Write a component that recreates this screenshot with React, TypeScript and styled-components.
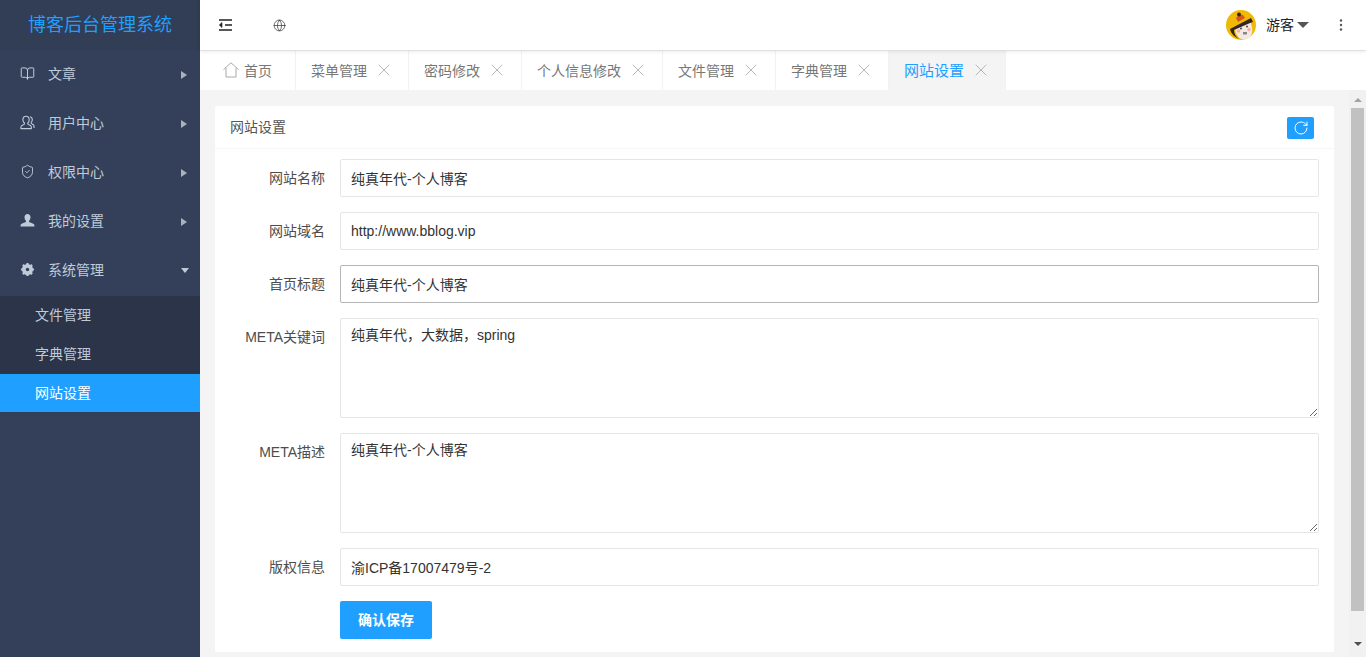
import React from "react";
import styled, { createGlobalStyle } from "styled-components";
import { X, RotateCw, BookOpen, ShieldCheck, Globe } from "lucide-react";

const GlobalStyle = createGlobalStyle`
  html, body, #root {
    margin: 0;
    height: 100%;
  }
  body {
    font-family: "Liberation Sans", "Noto Sans CJK SC", sans-serif;
    font-size: 14px;
    color: #333;
    overflow: hidden;
  }
  * {
    box-sizing: border-box;
  }
`;

const Layout = styled.div`
  display: flex;
  width: 100%;
  height: 657px;
`;

const Sidebar = styled.aside`
  flex: 0 0 200px;
  background: #344059;
`;

const Logo = styled.div`
  height: 51px;
  line-height: 50px;
  text-align: center;
  font-size: 18px;
  color: #1f9fff;
  background: #323d56;
`;

const MenuItem = styled.div`
  display: flex;
  align-items: center;
  height: 49px;
  padding: 0 11px 4px 20px;
  color: #bfcbd9;
`;

const MenuIcon = styled.span`
  display: flex;
  justify-content: center;
  width: 15px;
  margin-right: 13px;
`;

const MenuLabel = styled.span`
  flex: 1;
  padding-bottom: 2px;
`;

const Caret = styled.span<{ $open?: boolean }>`
  width: 0;
  height: 0;
  margin-top: 2px;
  ${(p) =>
    p.$open
      ? `border-left: 4.5px solid transparent;
         border-right: 4.5px solid transparent;
         border-top: 5px solid #bfcbd9;`
      : `border-top: 4.5px solid transparent;
         border-bottom: 4.5px solid transparent;
         border-left: 6px solid #a9b2c0;
         margin-right: 2px;`}
`;

const SubMenu = styled.div`
  background: #2b3449;
`;

const SubItem = styled.div<{ $active?: boolean }>`
  height: ${(p) => (p.$active ? "38px" : "39px")};
  line-height: 38px;
  padding-left: 35px;
  color: ${(p) => (p.$active ? "#fff" : "#bfcbd9")};
  background: ${(p) => (p.$active ? "#1f9fff" : "transparent")};
`;

const Main = styled.div`
  flex: 1;
  min-width: 0;
  display: flex;
  flex-direction: column;
`;

const Header = styled.header`
  position: relative;
  z-index: 2;
  flex: 0 0 50px;
  display: flex;
  align-items: center;
  padding: 0 23px 0 18px;
  background: #fff;
  box-shadow: 0 1px 4px rgba(0, 21, 41, 0.12);
`;

const HeaderIcon = styled.span`
  display: flex;
  width: 15px;
  margin-right: 40px;
`;

const Spacer = styled.div`
  flex: 1;
`;

const UserBox = styled.div`
  display: flex;
  align-items: center;
  color: #222;
`;

const UserName = styled.span`
  margin-left: 10px;
  padding-bottom: 2px;
`;

const UserCaret = styled.span`
  width: 0;
  height: 0;
  margin-left: 3px;
  border-left: 6px solid transparent;
  border-right: 6px solid transparent;
  border-top: 6px solid #555;
`;

const Dots = styled.span`
  display: flex;
  margin-left: 30px;
`;

const TabBar = styled.nav`
  flex: 0 0 40px;
  display: flex;
  padding-left: 8px;
  background: #fff;
  border-top: 1px solid #f0f0f0;
`;

const Tab = styled.div<{ $active?: boolean }>`
  display: flex;
  align-items: center;
  gap: 7px;
  padding: 0 14px 2px 15px;
  border-right: 1px solid #f2f2f2;
  font-size: ${(p) => (p.$active ? "15px" : "14px")};
  color: ${(p) => (p.$active ? "#1f9fff" : "#777")};
  background: ${(p) => (p.$active ? "#f4f4f4" : "#fff")};

  svg {
    color: #aaa;
  }
`;

const HomeTab = styled(Tab)`
  gap: 5px;
  padding: 0 23px 2px 15px;
`;

const ContentRow = styled.div`
  flex: 1;
  min-height: 0;
  display: flex;
`;

const Content = styled.div`
  flex: 1;
  min-width: 0;
  overflow: hidden;
  background: #f4f4f4;
  padding: 16px 15px 0;
`;

const ScrollTrack = styled.div`
  flex: 0 0 17px;
  display: flex;
  flex-direction: column;
  padding: 1px 2px 5px;
  background: #f1f1f1;
`;

const ScrollArrow = styled.div`
  flex: 0 0 17px;
  display: flex;
  align-items: center;
  justify-content: center;
`;

const ArrowUp = styled.span`
  border-left: 4px solid transparent;
  border-right: 4px solid transparent;
  border-bottom: 4px solid #a3a3a3;
`;

const ArrowDown = styled.span`
  border-left: 4px solid transparent;
  border-right: 4px solid transparent;
  border-top: 4px solid #505050;
`;

const ScrollThumb = styled.div`
  flex: 0 0 503px;
  background: #c1c1c1;
`;

const ScrollGap = styled.div`
  flex: 1;
`;

const Card = styled.section`
  background: #fff;
  border-radius: 2px;
`;

const CardHeader = styled.div`
  display: flex;
  align-items: center;
  justify-content: space-between;
  height: 43px;
  padding: 0 20px 0 15px;
  border-bottom: 1px solid #f6f6f6;
  color: #555;
  line-height: 40px;
`;

const RefreshButton = styled.button`
  display: flex;
  align-items: center;
  justify-content: center;
  width: 27px;
  height: 22px;
  margin-top: 1px;
  padding: 0;
  border: 0;
  border-radius: 2px;
  color: #fff;
  background: #1f9fff;
`;

const Form = styled.form`
  display: grid;
  grid-template-columns: 110px 1fr;
  column-gap: 15px;
  row-gap: 15px;
  padding: 10px 15px 13px 0;
`;

const Label = styled.label<{ $top?: boolean }>`
  justify-self: end;
  align-self: ${(p) => (p.$top ? "start" : "center")};
  padding: ${(p) => (p.$top ? "8px 0 0" : "0 0 2px")};
  color: #4d4d4d;
  white-space: nowrap;
`;

const Input = styled.input<{ $strong?: boolean }>`
  width: 100%;
  height: 38px;
  padding: 0 10px;
  border: 1px solid ${(p) => (p.$strong ? "#b5b5b5" : "#e6e6e6")};
  border-radius: 2px;
  outline: none;
  font: inherit;
  color: #333;
`;

const TextArea = styled.textarea`
  display: block;
  width: 100%;
  height: 100px;
  padding: 8px 10px;
  border: 1px solid #e6e6e6;
  border-radius: 2px;
  outline: none;
  font: inherit;
  line-height: 16px;
  color: #333;
`;

const SaveButton = styled.button`
  grid-column: 2;
  justify-self: start;
  width: 92px;
  height: 38px;
  padding: 0 0 2px;
  border: 0;
  border-radius: 2px;
  font: inherit;
  font-weight: 700;
  color: #fff;
  background: #1f9fff;
`;

const HouseIcon = () => (
  <svg width="16" height="16" viewBox="0 0 16 16" fill="none" stroke="#aaa" strokeWidth="1">
    <path d="M.5 7.500 8 .8l7.500 6.700" />
    <path d="M3 6v9h10V6" />
  </svg>
);

const UserIcon = () => (
  <svg width="15" height="15" viewBox="0 0 15 15" fill="none" stroke="currentColor" strokeWidth="1.1">
    <path d="M6 1.200c2 0 3.200 1.500 3.200 3.500 0 1.400-.6 2.600-1.400 3.300v1c0 .6 3 1.200 3.400 2.400.2.6.1 2.200.1 2.200H1s-.2-1.600.1-2.200C1.600 10.200 4.400 9.600 4.400 9V8C3.500 7.300 2.900 6.100 2.900 4.700 2.900 2.700 4 1.200 6 1.200z" />
    <path d="M10 1.800c1.400.3 2.300 1.500 2.300 3 0 1.100-.5 2-1.100 2.700v1c.5.600 2.700 1 2.800 2.400v2" />
  </svg>
);

const PersonIcon = () => (
  <svg width="15" height="15" viewBox="0 0 15 15" fill="currentColor">
    <path d="M7.500 1c2 0 3 1.500 3 3.300 0 1.400-.6 2.700-1.400 3.400v1.200c.8.700 5.200 1.300 5.300 3.100v1.500H.6V12c.1-1.800 4.500-2.400 5.300-3.100V7.700C5.100 7 4.500 5.700 4.500 4.300 4.500 2.500 5.500 1 7.500 1z" />
  </svg>
);

const GearIcon = () => (
  <svg width="15" height="15" viewBox="0 0 15 15">
    <circle cx="7.500" cy="7.500" r="4" fill="none" stroke="currentColor" strokeWidth="3" />
    <path
      d="M7.500 1v13M1 7.500h13M2.900 2.900l9.200 9.200M12.100 2.900l-9.200 9.200"
      stroke="currentColor"
      strokeWidth="2.200"
    />
    <circle cx="7.500" cy="7.500" r="1.700" fill="#344059" />
  </svg>
);

const OutdentIcon = () => (
  <svg width="15" height="14" viewBox="0 0 15 14" stroke="#222" strokeWidth="1.400" fill="none">
    <path d="M1 2h13M7 7h7M1 12h13" />
    <path d="M4 4.500 1.300 7 4 9.500z" fill="#222" strokeWidth="0.600" />
  </svg>
);

const DotsIcon = () => (
  <svg width="4" height="12" viewBox="0 0 4 12" fill="#555">
    <circle cx="2" cy="1.500" r="1.200" />
    <circle cx="2" cy="6" r="1.200" />
    <circle cx="2" cy="10.500" r="1.200" />
  </svg>
);

const Avatar = () => (
  <svg width="30" height="30" viewBox="0 0 30 30">
    <circle cx="15" cy="15" r="15" fill="#f0b905" />
    <path d="M9 18l15-6c3 5 3 11 0 15-3 3-8 3-11 1-2-3-4-6-4-10z" fill="#f4e9e2" />
    <path d="M4 19 25 8l2 4-3 1L8 20c0 4 2 7 5 9-4-2-8-5-9-10z" fill="#33261e" />
    <path d="M10 8c2-3 5-4 7-3l2 3-7 4z" fill="#d9541e" />
    <circle cx="13" cy="4.500" r="2" fill="#33261e" />
    <circle cx="15" cy="18.500" r="1" fill="#444" />
    <circle cx="21" cy="16.500" r="1" fill="#444" />
    <circle cx="12.500" cy="21" r="1.700" fill="#f0b0a8" />
    <circle cx="23" cy="19.500" r="1.700" fill="#f0b0a8" />
    <path d="M17 22h4v2.500h-4z" fill="#888" />
  </svg>
);

const tabs = ["菜单管理", "密码修改", "个人信息修改", "文件管理", "字典管理"];

const menus = [
  { label: "文章", icon: <BookOpen size={17} strokeWidth={1.6} /> },
  { label: "用户中心", icon: <UserIcon /> },
  { label: "权限中心", icon: <ShieldCheck size={17} strokeWidth={1.5} /> },
  { label: "我的设置", icon: <PersonIcon /> },
];

export default function App() {
  return (
    <Layout>
      <GlobalStyle />
      <Sidebar>
        <Logo>博客后台管理系统</Logo>
        {menus.map((m) => (
          <MenuItem key={m.label}>
            <MenuIcon>{m.icon}</MenuIcon>
            <MenuLabel>{m.label}</MenuLabel>
            <Caret />
          </MenuItem>
        ))}
        <MenuItem>
          <MenuIcon>
            <GearIcon />
          </MenuIcon>
          <MenuLabel>系统管理</MenuLabel>
          <Caret $open />
        </MenuItem>
        <SubMenu>
          <SubItem>文件管理</SubItem>
          <SubItem>字典管理</SubItem>
          <SubItem $active>网站设置</SubItem>
        </SubMenu>
      </Sidebar>
      <Main>
        <Header>
          <HeaderIcon>
            <OutdentIcon />
          </HeaderIcon>
          <HeaderIcon>
            <Globe size={13} strokeWidth={1.3} color="#333" />
          </HeaderIcon>
          <Spacer />
          <UserBox>
            <Avatar />
            <UserName>游客</UserName>
            <UserCaret />
            <Dots>
              <DotsIcon />
            </Dots>
          </UserBox>
        </Header>
        <TabBar>
          <HomeTab>
            <HouseIcon />
            首页
          </HomeTab>
          {tabs.map((t) => (
            <Tab key={t}>
              {t}
              <X size={20} strokeWidth={1} />
            </Tab>
          ))}
          <Tab $active>
            网站设置
            <X size={20} strokeWidth={1} />
          </Tab>
        </TabBar>
        <ContentRow>
          <Content>
            <Card>
              <CardHeader>
                网站设置
                <RefreshButton type="button">
                  <RotateCw size={16} strokeWidth={1.5} />
                </RefreshButton>
              </CardHeader>
              <Form>
                <Label>网站名称</Label>
                <Input defaultValue="纯真年代-个人博客" />
                <Label>网站域名</Label>
                <Input defaultValue="http://www.bblog.vip" />
                <Label>首页标题</Label>
                <Input $strong defaultValue="纯真年代-个人博客" />
                <Label $top>META关键词</Label>
                <TextArea defaultValue="纯真年代，大数据，spring" />
                <Label $top>META描述</Label>
                <TextArea defaultValue="纯真年代-个人博客" />
                <Label>版权信息</Label>
                <Input defaultValue="渝ICP备17007479号-2" />
                <SaveButton type="button">确认保存</SaveButton>
              </Form>
            </Card>
          </Content>
          <ScrollTrack>
            <ScrollArrow>
              <ArrowUp />
            </ScrollArrow>
            <ScrollThumb />
            <ScrollGap />
            <ScrollArrow>
              <ArrowDown />
            </ScrollArrow>
          </ScrollTrack>
        </ContentRow>
      </Main>
    </Layout>
  );
}
